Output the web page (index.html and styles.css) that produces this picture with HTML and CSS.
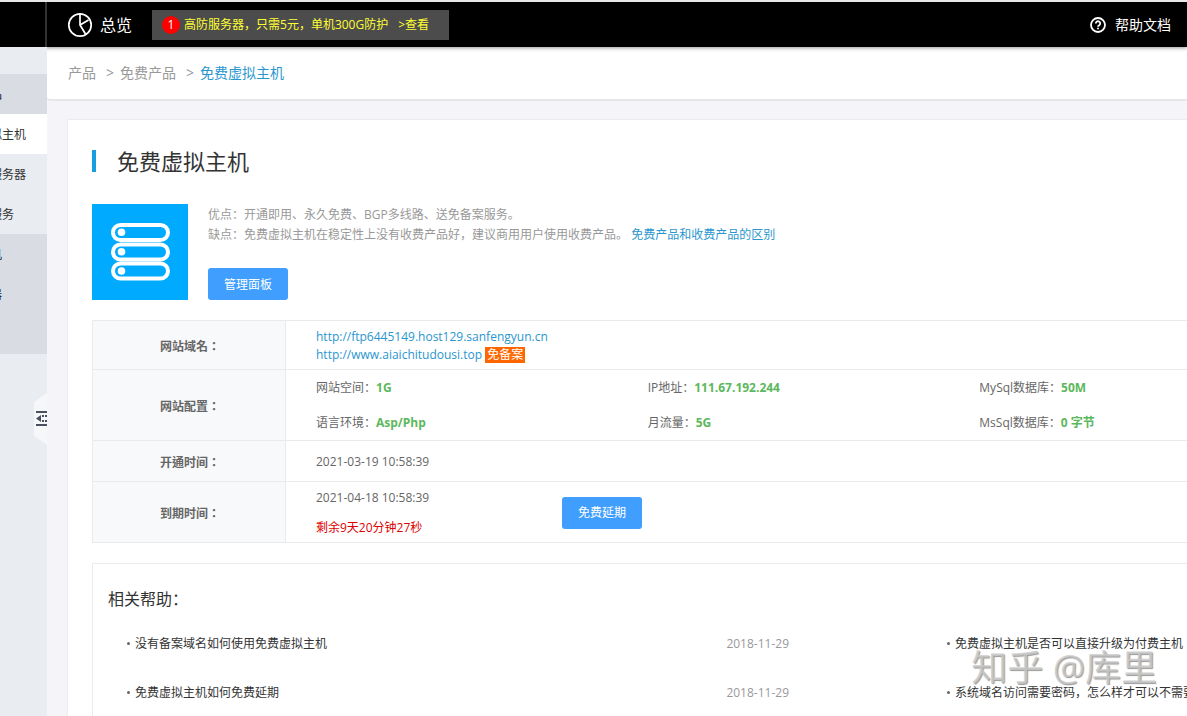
FILE: index.html
```html
<!DOCTYPE html>
<html lang="zh-CN">
<head>
<meta charset="utf-8">
<title>免费虚拟主机</title>
<link rel="stylesheet" href="styles.css">
</head>
<body>
<header class="topbar">
  <div class="topbar-side"></div>
  <a class="overview" href="#">
    <svg class="overview-icon" viewBox="0 0 26 26" fill="none" stroke="#fff" stroke-width="1.7" stroke-linejoin="round"><circle cx="13" cy="13" r="11.2"/><path d="M13 2v11l8.5-5M13 13l5.5 9"/></svg>
    <span>总览</span>
  </a>
  <a class="promo" href="#"><span class="promo-count">1</span><span>高防服务器，只需5元，单机300G防护</span><span class="promo-more">&gt;查看</span></a>
  <a class="docs" href="#">
    <svg class="docs-icon" viewBox="0 0 16 16" fill="none" stroke="#fff" stroke-width="1.8"><circle cx="8" cy="8" r="7"/><path d="M5.8 6.5a2.2 2.2 0 1 1 3.4 1.8c-.8.5-1.2.8-1.2 1.500"/><path d="M8 10.8v1.5"/></svg>
    <span>帮助文档</span>
  </a>
</header>
<div class="layout">
  <nav class="sidebar">
    <ul class="menu">
      <li class="group">品</li>
      <li class="active"><a href="#">拟主机</a></li>
      <li><a href="#">服务器</a></li>
      <li><a href="#">服务</a></li>
      <li class="group">机</li>
      <li class="group">器</li>
      <li class="group"></li>
    </ul>
    <button class="collapse" type="button" aria-label="收起菜单">
      <svg class="collapse-icon" viewBox="0 0 13 52"><path d="M13 0v52L0 43V9z" fill="#f6f7f8"/><path d="M2 18h11v2H2zM2 31h11v2H2zM8 22h2v2H8zM11 22h2v2h-2zM8 27h2v2H8zM11 27h2v2h-2zM2 25.500l5-3.500v7z" fill="#4b4f60"/></svg>
    </button>
  </nav>
  <main class="main">
    <nav class="crumbs"><a href="#">产品</a><span class="sep">&gt;</span><a href="#">免费产品</a><span class="sep">&gt;</span><a class="current" href="#">免费虚拟主机</a></nav>
    <section class="panel">
      <h1 class="title">免费虚拟主机</h1>
      <div class="intro">
        <svg class="product" viewBox="0 0 96 96"><path fill="#0af" d="M0 0h96v96H0z"/><g fill="none" stroke="#fff" stroke-width="4"><rect x="21" y="21" width="55" height="15" rx="7.500"/><rect x="21" y="40.500" width="55" height="15" rx="7.500"/><rect x="21" y="59.500" width="55" height="15" rx="7.500"/></g><g fill="#fff"><circle cx="29.500" cy="28.300" r="3.800"/><circle cx="29.500" cy="47.800" r="3.800"/><circle cx="29.500" cy="67" r="3.800"/></g></svg>
        <div>
          <p class="desc">优点：开通即用、永久免费、BGP多线路、送免备案服务。</p>
          <p class="desc">缺点：免费虚拟主机在稳定性上没有收费产品好，建议商用用户使用收费产品。 <a href="#">免费产品和收费产品的区别</a></p>
          <button class="btn manage" type="button">管理面板</button>
        </div>
      </div>
      <table class="info">
        <tr class="row-domain"><th scope="row" lang="zh-TW">网站域名：</th><td><a href="#">http://ftp6445149.host129.sanfengyun.cn</a><br><a href="#">http://www.aiaichitudousi.top</a> <span class="tag">免备案</span></td></tr>
        <tr class="row-config"><th scope="row" lang="zh-TW">网站配置：</th><td><div class="config">
          <span>网站空间：<b>1G</b></span><span>IP地址：<b>111.67.192.244</b></span><span>MySql数据库：<b>50M</b></span>
          <span>语言环境：<b>Asp/Php</b></span><span>月流量：<b>5G</b></span><span>MsSql数据库：<b>0 字节</b></span>
        </div></td></tr>
        <tr class="row-open"><th scope="row" lang="zh-TW">开通时间：</th><td>2021-03-19 10:58:39</td></tr>
        <tr class="row-expire"><th scope="row" lang="zh-TW">到期时间：</th><td><div class="expire"><div class="expire-text"><p>2021-04-18 10:58:39</p><p class="remain">剩余9天20分钟27秒</p></div><button class="btn" type="button">免费延期</button></div></td></tr>
      </table>
      <section class="help">
        <h2 class="help-title">相关帮助：</h2>
        <ul class="help-list">
          <li><a href="#">没有备案域名如何使用免费虚拟主机</a><time>2018-11-29</time></li>
          <li><a href="#">免费虚拟主机是否可以直接升级为付费主机</a></li>
          <li><a href="#">免费虚拟主机如何免费延期</a><time>2018-11-29</time></li>
          <li><a href="#">系统域名访问需要密码，怎么样才可以不需要</a></li>
        </ul>
      </section>
    </section>
  </main>
</div>
<div class="watermark">知乎 @库里</div>
</body>
</html>
```
FILE: styles.css
```css
* { box-sizing: border-box; }
body {
  margin: 0;
  height: 100vh;
  overflow: hidden;
  display: flex;
  flex-direction: column;
  border-top: 2px solid #e6e8ea;
  background: #f4f4f9;
  color: #666;
  font: 12px/18px "Open Sans", "Noto Sans CJK SC", sans-serif;
}
a { color: #2a96cf; text-decoration: none; }
p, h1, h2, ul { margin: 0; padding: 0; font-weight: normal; }
ul { list-style: none; }
button { font: inherit; border: 0; padding: 0; cursor: pointer; }

.topbar {
  position: relative;
  flex: none;
  display: flex;
  align-items: center;
  height: 45px;
  background: #000;
  box-shadow: 0 1px 4px rgba(0, 0, 0, .4);
}
.topbar-side { width: 47px; height: 45px; border-right: 2px solid #333; }
.overview { display: flex; align-items: center; gap: 7px; margin-left: 20px; color: #fff; font-size: 16px; }
.overview-icon { width: 26px; height: 26px; }
.promo {
  display: flex;
  align-items: center;
  height: 30px;
  margin-left: 20px;
  padding: 0 20px 0 10px;
  background: #4c4c4c;
  color: #ff3;
}
.promo-count {
  width: 18px;
  margin-right: 4px;
  border-radius: 50%;
  background: #f00;
  color: #fff;
  text-align: center;
}
.promo-more { margin-left: 10px; }
.docs { display: flex; align-items: center; gap: 9px; margin: 0 16px 0 auto; color: #fff; font-size: 14px; }
.docs-icon { width: 16px; height: 16px; }

.layout { flex: 1; display: flex; min-height: 0; }
.sidebar {
  position: relative;
  flex: none;
  width: 47px;
  padding-top: 27px;
  overflow: hidden;
  background: #e9ecf1;
}
.menu { margin-left: -10px; color: #333; line-height: 42px; }
.menu li { height: 40px; }
.menu a { color: #333; }
.menu .group { background: #d9dde3; color: #223; }
.menu .active { background: #fff; }
.collapse { position: absolute; right: 0; top: 346px; width: 13px; height: 52px; background: none; }
.collapse-icon { display: block; width: 13px; height: 52px; }

.main { flex: 1; min-width: 0; overflow: hidden; }
.crumbs {
  display: flex;
  align-items: center;
  height: 54px;
  padding-left: 21px;
  border-bottom: 2px solid #e6e6e8;
  border-bottom-left-radius: 4px;
  background: #fff;
  font-size: 14px;
}
.crumbs a { color: #999; }
.crumbs .current { color: #2a96cf; }
.sep { margin: 0 6px 0 10px; color: #999; }

.panel {
  margin: 18px -150px 0 20px;
  padding: 30px 24px 24px;
  border: 1px solid #ececf0;
  background: #fff;
}
.title {
  padding-left: 21px;
  border-left: 4px solid #189fdf;
  color: #333;
  font-size: 22px;
  line-height: 22px;
}
.intro { display: flex; gap: 20px; margin-top: 32px; }
.product { flex: none; width: 96px; height: 96px; }
.desc { color: #999; line-height: 20px; }
.desc:first-child { padding-top: 1px; }
.btn { width: 80px; height: 32px; padding-top: 1px; border-radius: 3px; background: #409eff; color: #fff; }
.manage { margin-top: 23px; }

.info { width: 100%; margin-top: 20px; border-collapse: collapse; table-layout: fixed; }
.info th, .info td { border: 1px solid #e8eaee; }
.info th {
  width: 193px;
  padding: 2px 0 0 2px;
  background: #f8f9fb;
  font-family: "Noto Sans CJK TC", "Noto Sans CJK SC", sans-serif;
  text-align: center;
}
.info td { padding: 1px 0 0 30px; }
.row-domain { height: 49px; }
.row-config { height: 71px; }
.row-open { height: 41px; }
.row-expire { height: 61px; }
.tag { display: inline-block; padding: 0 2px; background: #f60; color: #fff; line-height: 16px; }
.config { display: grid; grid-template-columns: repeat(3, 1fr); row-gap: 17px; }
.config b { color: #5cb85c; }
.expire { display: flex; align-items: center; gap: 128px; }
.expire-text { display: grid; row-gap: 12px; min-width: 118px; }
.remain { color: #d00; }

.help { margin-top: 20px; padding: 25px 15px; border: 1px solid #ececf0; }
.help-title { color: #333; font-size: 16px; line-height: 20px; }
.help-list { display: grid; grid-template-columns: 820px 820px; margin-top: 11px; padding-left: 19px; }
.help-list li { display: flex; justify-content: space-between; height: 49px; padding-right: 158px; line-height: 48px; white-space: nowrap; }
.help-list a { color: #333; }
.help-list a::before { content: ""; display: inline-block; width: 3px; height: 3px; margin-right: 5px; border-radius: 50%; background: #666; vertical-align: 3px; }
.help-list time { color: #999; }
.watermark {
  position: absolute;
  right: 30px;
  bottom: 26px;
  color: rgba(205, 205, 205, .8);
  font-size: 36px;
  line-height: 44px;
  text-shadow: 1px 1px 1px rgba(0, 0, 0, .4);
  pointer-events: none;
}
```
